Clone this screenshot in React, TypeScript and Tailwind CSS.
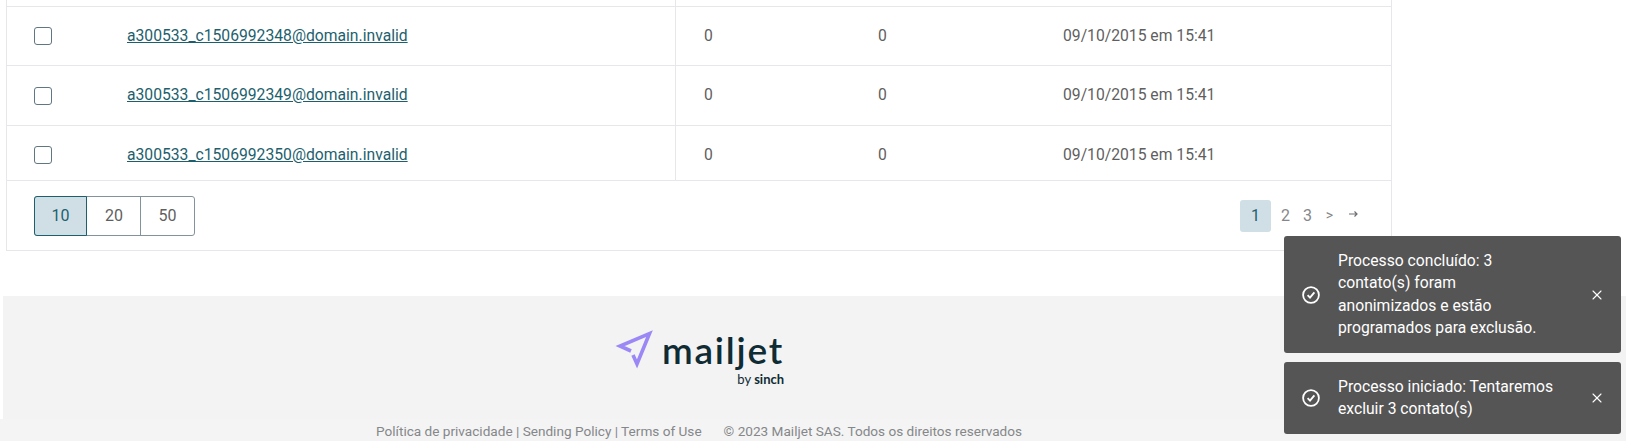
import React from 'react';
import { X } from 'lucide-react';

interface Contact {
  email: string;
  height: string;
  checkTop: string;
}

const contacts: Contact[] = [
  { email: 'a300533_c1506992348@domain.invalid', height: 'h-[59px]', checkTop: 'mt-[20px]' },
  { email: 'a300533_c1506992349@domain.invalid', height: 'h-[60px]', checkTop: 'mt-[21px]' },
  { email: 'a300533_c1506992350@domain.invalid', height: 'h-[55px]', checkTop: 'mt-[20px]' },
];

const CheckCircle = () => (
  <svg width="18" height="18" viewBox="0 0 18 18" fill="none" stroke="white" strokeWidth="1.8">
    <circle cx="9" cy="9" r="7.9" />
    <path d="M5.6 9.2 L8 11.6 L12.4 6.4" strokeWidth="1.9" />
  </svg>
);

const Toast: React.FC<{ lines: string[] }> = ({ lines }) => (
  <div className="w-[337px] bg-[#555555] rounded-[3px] flex items-center pl-[18px] pr-[16px] py-[13.5px] text-[15.7px] leading-[22.5px] text-white">
    <CheckCircle />
    <div className="ml-[18px] flex-1">
      {lines.map((line) => (
        <div key={line}>{line}</div>
      ))}
    </div>
    <X size={16} strokeWidth={1.6} className="text-white" />
  </div>
);

const Logo = () => (
  <div className="flex items-start">
    <svg width="46" height="46" viewBox="0 0 46 46" fill="none" stroke="#9b87f5" strokeWidth="3.6" strokeMiterlimit="10">
      <path d="M20 23 L9 18 L38.5 5.5 L26 36 L22 27" />
    </svg>
    <div className="ml-[5px] flex flex-col items-end">
      <span className="text-[37px] leading-[44px] font-semibold tracking-[1.8px] text-[#0f2b33] font-['Lato',sans-serif]">mailjet</span>
      <span className="text-[13px] leading-[14px] text-[#0f2b33] font-['Lato',sans-serif]">
        by <span className="font-bold">sinch</span>
      </span>
    </div>
  </div>
);

export default function App() {
  return (
    <div className="relative w-[1626px] h-[441px] overflow-hidden bg-white text-[#5f5f5f] font-['Roboto',sans-serif]">
      <div className="pl-[6px] w-[1392px]">
        <div className="border-x border-[#e5e7eb]">
          <div className="h-[7px] border-b border-[#e5e7eb] flex">
            <div className="w-[669px] border-r border-[#e5e7eb]" />
          </div>
          {contacts.map((c) => (
            <div key={c.email} className={`${c.height} border-b border-[#e5e7eb] flex items-start text-[15.7px] leading-[24px]`}>
              <div className="w-[669px] h-full border-r border-[#e5e7eb] flex items-start pl-[27px]">
                <span className={`${c.checkTop} w-[18px] h-[18px] rounded-[3px] border border-[#5f7683] bg-white`} />
                <a href="#" className="mt-[17px] ml-[75px] text-[#1e5f6e] underline">{c.email}</a>
              </div>
              <div className="mt-[17px] w-[181px] pl-[28px]">0</div>
              <div className="mt-[17px] w-[180px] pl-[21px]">0</div>
              <div className="mt-[17px] pl-[26px]">09/10/2015 em 15:41</div>
            </div>
          ))}
          <div className="h-[70px] border-b border-[#e5e7eb] flex items-center justify-between pl-[27px] pr-[31px] text-[16px]">
            <div className="flex h-[40px] rounded-[3px] border border-[#83939c]">
              <span className="w-[53px] bg-[#d0dfe6] border border-[#1e5f6e] -m-px rounded-l-[3px] text-[#1e5f6e] flex items-center justify-center">10</span>
              <span className="w-[55px] pl-[2px] border-r border-[#83939c] flex items-center justify-center">20</span>
              <span className="w-[53px] flex items-center justify-center">50</span>
            </div>
            <div className="flex items-center text-[#85878a]">
              <span className="w-[31px] h-[32px] bg-[#d0dfe6] rounded-[3px] text-[#1e5f6e] flex items-center justify-center">1</span>
              <span className="ml-[8px] w-[13px] text-center">2</span>
              <span className="ml-[9px] w-[13px] text-center">3</span>
              <span className="ml-[9px] w-[13px] text-center text-[14px]">&gt;</span>
              <svg width="12" height="12" viewBox="0 0 12 12" fill="none" stroke="#6b6f72" strokeWidth="1.2" className="ml-[11px] mr-[1px] -mt-[3px]">
                <path d="M2 6 H10 M7.5 3.5 L10 6 L7.5 8.5" />
              </svg>
            </div>
          </div>
        </div>
      </div>

      <div className="mt-[45px] ml-[3px] h-[123px] bg-[#f3f3f3]">
        <div className="w-[1392px] flex justify-center pt-[32px] pr-[3px]">
          <Logo />
        </div>
      </div>
      <div className="h-[22px] bg-[#f4f4f4] pt-px">
        <div className="w-[1398px] flex justify-center text-[13.6px] leading-[22px] text-[#85878a]">
          <span>Política de privacidade | Sending Policy | Terms of Use</span>
          <span className="ml-[22px]">© 2023 Mailjet SAS. Todos os direitos reservados</span>
        </div>
      </div>

      <div className="absolute left-[1284px] top-[236px] flex flex-col gap-[9px]">
        <Toast lines={['Processo concluído: 3', 'contato(s) foram', 'anonimizados e estão', 'programados para exclusão.']} />
        <Toast lines={['Processo iniciado: Tentaremos', 'excluir 3 contato(s)']} />
      </div>
    </div>
  );
}
